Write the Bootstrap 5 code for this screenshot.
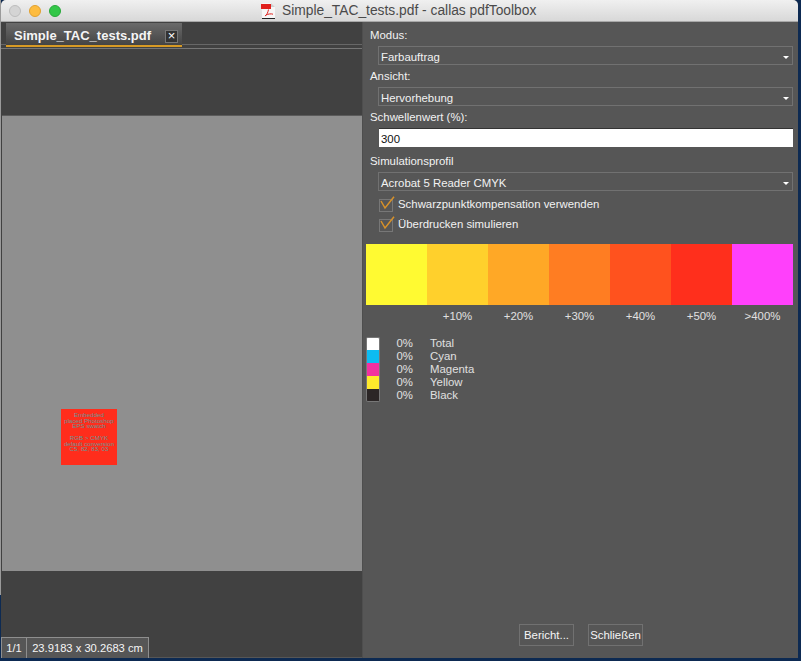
<!DOCTYPE html>
<html lang="de"><head><meta charset="utf-8"><title>Simple_TAC_tests.pdf - callas pdfToolbox</title>
<link rel="stylesheet" href="https://cdn.jsdelivr.net/npm/bootstrap@5.3.0/dist/css/bootstrap.min.css">
<style>
html,body{height:661px;overflow:hidden;margin:0}
body{background:linear-gradient(90deg,#9a9a9a 1px,transparent 1px) no-repeat 0 0/100% 595px,#0d2a52;font-family:"Liberation Sans",Arial,sans-serif;font-size:11.4px;color:#f2f2f2}
.win{width:797px;height:658px;margin-left:1px;background:#565656;border-radius:5px 5px 0 0;overflow:hidden}
.tbar{height:22px;flex:none;background:linear-gradient(#f0f0f0,#d8d8d8);border-bottom:1px solid #a8a8a8;padding-left:8px}
.lights{gap:8px;width:252px}
.tl{width:12px;height:12px;border-radius:50%}
.tl-g{background:#d4d4d4;border:1px solid #bcbcbc}.tl-y{background:#fdbc40;border:1px solid #e0a030}.tl-v{background:#33c748;border:1px solid #28a83a}
.ttl{font-size:13.8px;color:#4a4a4a;margin-left:6px;line-height:22px}
.doc{width:15px;height:16px;margin-top:1px}
.left{width:361px;height:635px;flex:none;background:#414141}
.tabs{height:24px;flex:none;padding-left:5px;position:relative}
.tabb{width:176px;height:24px;margin-top:1px;background:linear-gradient(#6a6a6a,#444);border-bottom:2px solid #d79a24;padding:4px 4px 0 8px;font-size:13px;font-weight:700;color:#f5f5f5;z-index:1}
.xbox{width:13px;height:13px;border:1px solid #777;background:#333;color:#fff;line-height:10px;text-align:center;font-size:13px;font-weight:400}
.rules{height:5px;flex:none;border-top:1px solid #676767;border-bottom:1px solid #767676;margin-top:-2px}
.spacer1{height:66px;flex:none}
.page{height:456px;flex:none;background:#8f8f8f;border-top:1px solid #5b5b5b;padding:293px 0 0 59px;margin-left:1px}
.redb{width:56px;height:56px;background:#ff2d1c;color:#6a9694;font-size:6.2px;line-height:5.7px;text-align:center;padding-top:3px;white-space:nowrap;overflow:hidden}
.stat{height:21px;flex:none;margin-top:66px;font-size:11.2px}
.sbox{background:#565656;border:1px solid #8e8e8e;border-bottom:0;height:21px;line-height:21px;color:#f5f5f5;margin-right:-1px}
.sb1{width:26px;text-align:center}.sb2{width:123px;text-align:center}
.right{width:436px;flex:none;padding:0 5px 0 3px;position:relative;border-left:1px solid #4e4e4e}
.lab{height:18px;line-height:18px;margin-left:4px;margin-bottom:2px}
.sel{height:19px;margin-left:12px;border:1px solid #717171;line-height:19px;padding:3px 0 0 2px;margin-bottom:2px}
.caret{border-left:3px solid transparent;border-right:3px solid transparent;border-top:3px solid #fff;margin-right:3px}
.inp{height:19px;margin-left:13px;background:#fff;color:#111;padding-left:2px;line-height:20px;border-top:1px solid #333;margin-bottom:5px}
.chk{height:20px;margin-left:13px;gap:5px}
.cbx{width:14px;height:13px;border:1px solid #777;position:relative;flex:none}
.cbx svg{position:absolute;left:0;top:-4px}
.bar{height:61px;margin-top:9px}
.bar i{display:block;flex:1 1 0;height:100%}
.pcts{height:20px;margin-top:1px;line-height:20px;color:#e0e0e0}
.pcts span{flex:1 1 0;text-align:center}
.lgd{margin-top:11px;line-height:13px;color:#e0e0e0}
.lrow{height:13px}
.sw{width:14px;height:13px;border-left:1px solid #777;border-right:1px solid #777}
.lrow:first-child .sw{border-top:1px solid #777;border-radius:2px 2px 0 0}
.lrow:last-child .sw{border-bottom:1px solid #777;border-radius:0 0 2px 2px}
.lp{width:33px;text-align:right;margin-right:17px}
.acts{position:absolute;left:156px;bottom:12px;gap:14px}
.bt{height:22px;width:55px;border:1px solid #717171;line-height:20px;text-align:center;color:#f5f5f5}
</style></head><body>
<div class="win d-flex flex-column">
 <div class="tbar d-flex align-items-center">
  <div class="lights d-flex"><span class="tl tl-g"></span><span class="tl tl-y"></span><span class="tl tl-v"></span></div>
  <svg class="doc" viewBox="0 0 15 16"><path d="M1 0h9l4 4v12H1z" fill="#f6f6f6"/><path d="M10 0l4 4h-4z" fill="#cfcfcf"/><rect x="0" y="1" width="10" height="5" fill="#e0201c"/><path d="M4 13c2-1 3-4 3.500-6.500M5 12c2-1 5-1.500 7-.8" stroke="#e0201c" stroke-width="1" fill="none"/><rect x="1" y="15" width="13" height="1" fill="#222"/></svg>
  <span class="ttl">Simple_TAC_tests.pdf - callas pdfToolbox</span>
 </div>
 <div class="d-flex flex-grow-1">
  <div class="left d-flex flex-column">
   <div class="tabs d-flex"><div class="tabb d-flex align-items-center justify-content-between"><span>Simple_TAC_tests.pdf</span><span class="xbox">×</span></div></div>
   <div class="rules"></div>
   <div class="spacer1"></div>
   <div class="page"><div class="redb">Embedded<br>placed Photoshop<br>EPS swatch<br><br>RGB &gt; CMYK<br>default conversion<br>C5, 82, 83, 03</div></div>
   <div class="stat d-flex"><span class="sbox sb1">1/1</span><span class="sbox sb2">23.9183 x 30.2683 cm</span></div>
  </div>
  <div class="right">
   <div class="lab" style="margin-top:4px">Modus:</div>
   <div class="sel d-flex justify-content-between align-items-center"><span>Farbauftrag</span><span class="caret"></span></div>
   <div class="lab">Ansicht:</div>
   <div class="sel d-flex justify-content-between align-items-center"><span>Hervorhebung</span><span class="caret"></span></div>
   <div class="lab">Schwellenwert (%):</div>
   <div class="inp">300</div>
   <div class="lab">Simulationsprofil</div>
   <div class="sel d-flex justify-content-between align-items-center" style="margin-bottom:4px"><span>Acrobat 5 Reader CMYK</span><span class="caret"></span></div>
   <div class="chk d-flex align-items-center"><span class="cbx"><svg width="16" height="16" viewBox="0 0 16 16"><path d="M1 5l4 7 9-11.300" fill="none" stroke="#d7912a" stroke-width="1.500"/></svg></span>Schwarzpunktkompensation verwenden</div>
   <div class="chk d-flex align-items-center"><span class="cbx"><svg width="16" height="16" viewBox="0 0 16 16"><path d="M1 5l4 7 9-11.300" fill="none" stroke="#d7912a" stroke-width="1.500"/></svg></span>Überdrucken simulieren</div>
   <div class="bar d-flex"><i style="background:#fffa32"></i><i style="background:#ffd02c"></i><i style="background:#ffa826"></i><i style="background:#ff7d22"></i><i style="background:#ff521e"></i><i style="background:#ff2f1c"></i><i style="background:#ff40fb"></i></div>
   <div class="pcts d-flex"><span></span><span>+10%</span><span>+20%</span><span>+30%</span><span>+40%</span><span>+50%</span><span>&gt;400%</span></div>
   <div class="lgd">
    <div class="lrow d-flex"><span class="sw" style="background:#fff"></span><span class="lp">0%</span><span>Total</span></div>
    <div class="lrow d-flex"><span class="sw" style="background:#0dbcf2"></span><span class="lp">0%</span><span>Cyan</span></div>
    <div class="lrow d-flex"><span class="sw" style="background:#f231a0"></span><span class="lp">0%</span><span>Magenta</span></div>
    <div class="lrow d-flex"><span class="sw" style="background:#ffea2c"></span><span class="lp">0%</span><span>Yellow</span></div>
    <div class="lrow d-flex"><span class="sw" style="background:#2b2626"></span><span class="lp">0%</span><span>Black</span></div>
   </div>
   <div class="acts d-flex"><span class="bt">Bericht...</span><span class="bt">Schließen</span></div>
  </div>
 </div>
</div>
</body></html>
